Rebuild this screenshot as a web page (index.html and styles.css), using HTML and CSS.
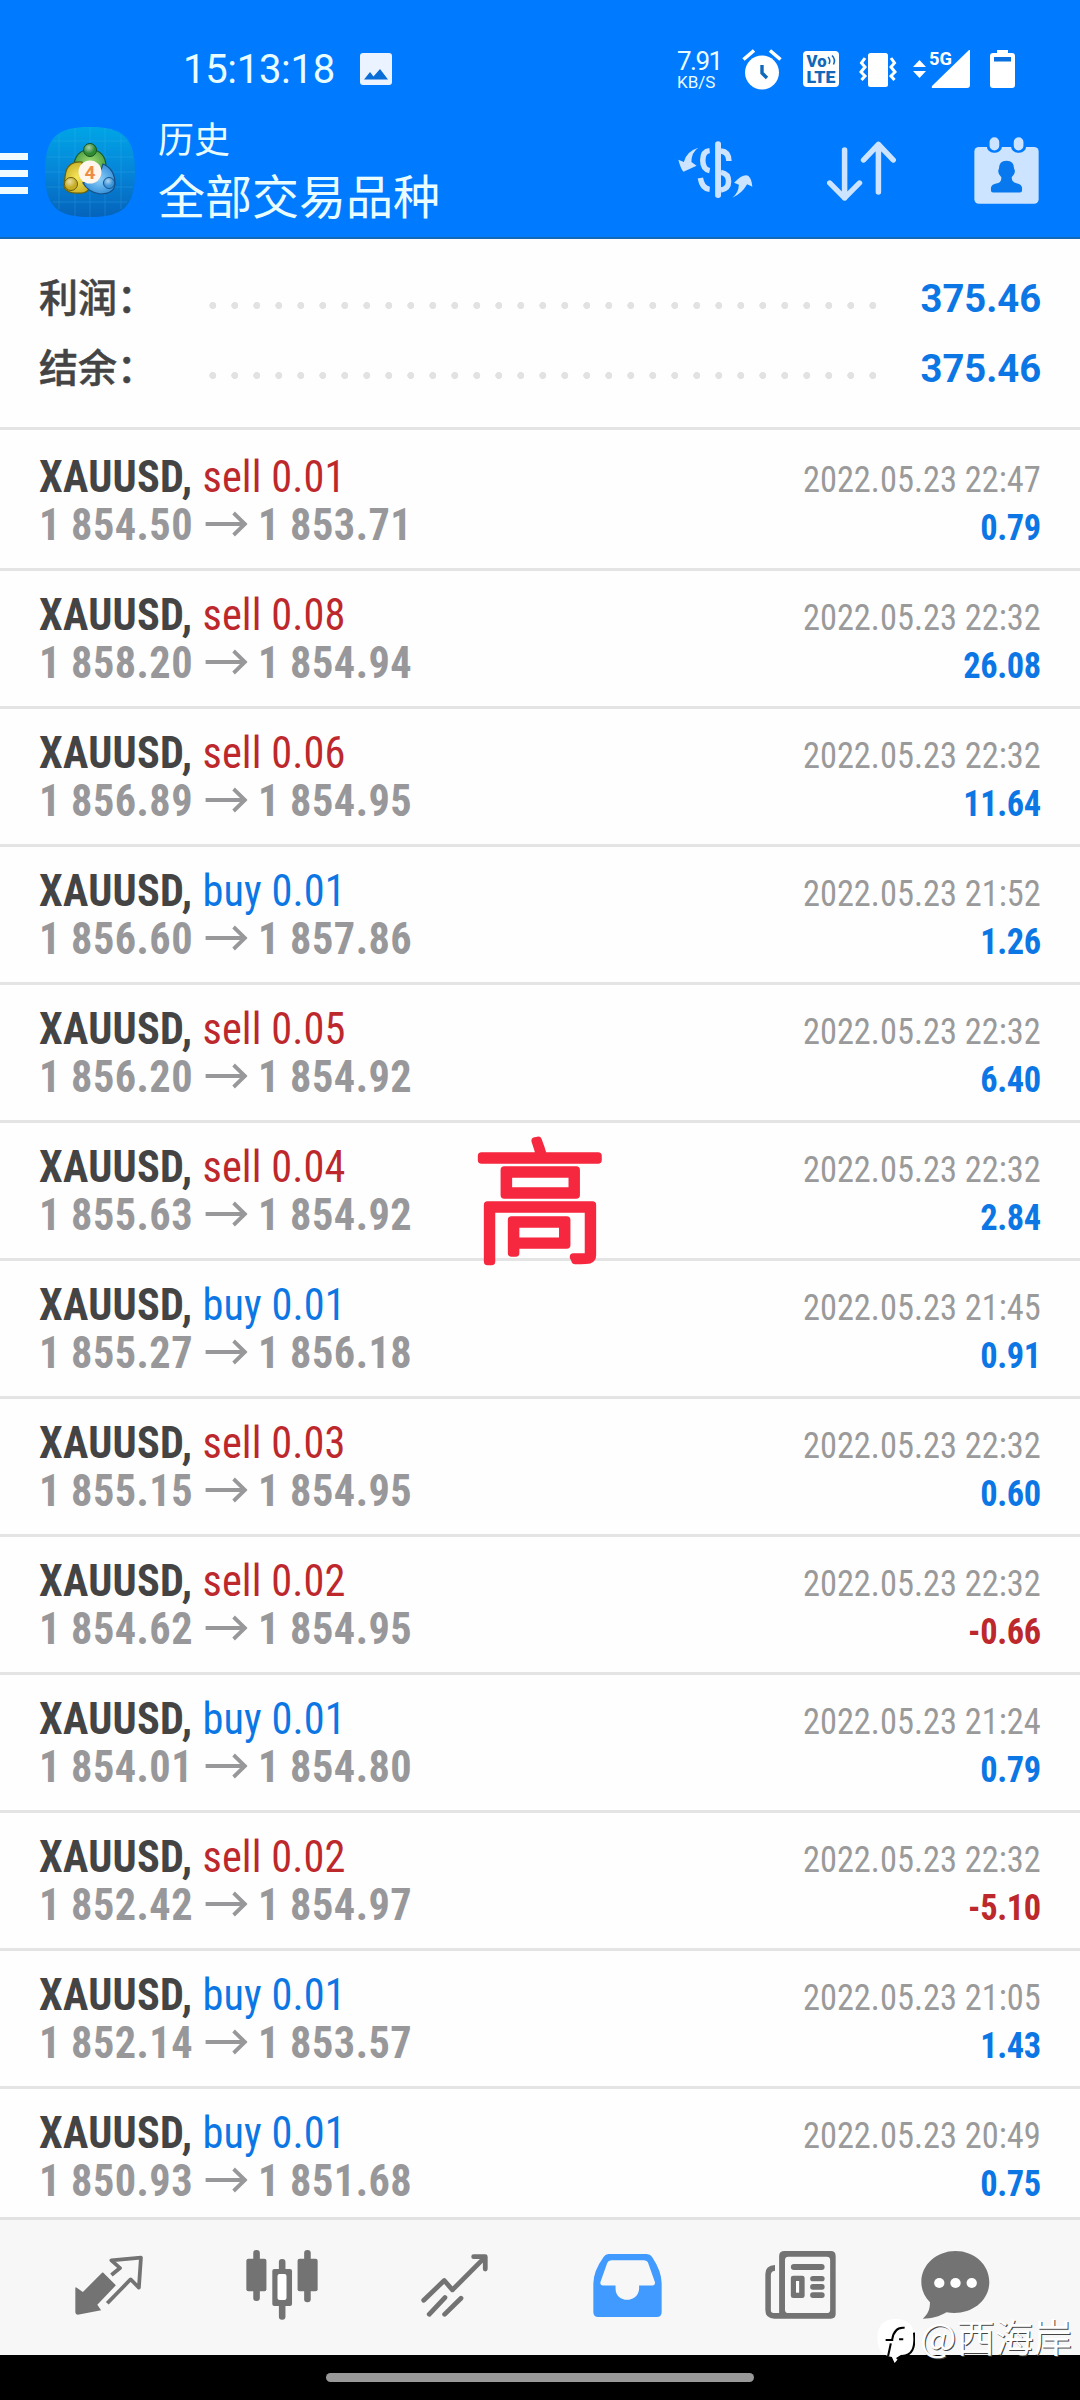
FILE: index.html
```html
<!DOCTYPE html>
<html lang="zh-CN">
<head>
<meta charset="utf-8">
<title>历史</title>
<link rel="stylesheet" href="styles.css">
</head>
<body>
<div class="screen">
  <header class="header">
    <div class="status">
      <div class="status-left">
        <span class="clock">15:13:18</span>
        <svg class="picture" width="32" height="32" viewBox="0 0 32 32"><rect width="32" height="32" rx="3" fill="#eaf3ff"/><path d="M4 26.500 10 19l3.500 4.500L20 16l8 10.500z" fill="#0a6cd6"/></svg>
      </div>
      <div class="status-right">
        <div class="speed"><span class="speed-value">7.91</span><span class="speed-unit">KB/S</span></div>
        <svg class="alarm" width="40" height="41" viewBox="0 0 40 41"><circle cx="20" cy="23.500" r="17" fill="#fff"/><path d="M1.500 10.500 12 1.500M38.500 10.500 28 1.500" stroke="#fff" stroke-width="3.600"/><path d="M20 16v8l5 5" fill="none" stroke="#1267b8" stroke-width="3.400"/></svg>
        <svg class="volte" width="36" height="36" viewBox="0 0 36 36"><rect width="36" height="36" rx="4" fill="#fff"/><text x="3.500" y="16" class="vo" textLength="20" lengthAdjust="spacingAndGlyphs">Vo</text><text x="3.500" y="32" class="vo" textLength="29" lengthAdjust="spacingAndGlyphs">LTE</text><path d="M25 6q3 3 1 7M29 4.500q4 4 1.500 9" fill="none" stroke="#1267b8" stroke-width="1.600"/></svg>
        <svg class="vibrate" width="38" height="36" viewBox="0 0 38 36"><rect x="9" y="1" width="20" height="34" rx="2.500" fill="#fff"/><path d="M6 6 2.500 11 6 15 2 20l4 4-3.500 4M32 6l3.500 5L32 15l4 5-4 4 3.500 4" fill="none" stroke="#fff" stroke-width="3"/></svg>
        <svg class="signal" width="58" height="38" viewBox="0 0 58 38"><path d="M0 17 6.500 10 13 17zM0 21h13l-6.500 7z" fill="#fff"/><path d="M57 0v35q0 3-3 3H20q-2 0-1-2L56 0z" fill="#fff"/><text x="16" y="14.500" class="fiveg" textLength="23" lengthAdjust="spacingAndGlyphs">5G</text></svg>
        <svg class="battery" width="25" height="38" viewBox="0 0 25 38"><path d="M7 0h11v3h4q3 0 3 3v29q0 3-3 3H3q-3 0-3-3V6q0-3 3-3h4z" fill="#fff"/><path d="M4 7h17v4.500H4z" fill="#0a6fdf"/></svg>
      </div>
    </div>
    <div class="toolbar">
      <div class="brand">
        <span class="burger"><i></i><i></i><i></i></span>
        <svg class="app-icon" width="90" height="90" viewBox="0 0 90 90">
          <defs>
            <linearGradient id="tile" x1="0" y1="0" x2="0" y2="1"><stop offset="0" stop-color="#00a5e6"/><stop offset=".5" stop-color="#0585d8"/><stop offset="1" stop-color="#0563bb"/></linearGradient>
            <radialGradient id="green"><stop offset="0" stop-color="#9fdd72"/><stop offset="1" stop-color="#4fa045"/></radialGradient>
            <radialGradient id="gold"><stop offset="0" stop-color="#f7e75a"/><stop offset="1" stop-color="#cdb52c"/></radialGradient>
            <radialGradient id="sky"><stop offset="0" stop-color="#8fd1fa"/><stop offset="1" stop-color="#3a93dc"/></radialGradient>
            <radialGradient id="ball" cx=".4" cy=".3"><stop offset="0" stop-color="#fff" stop-opacity=".6"/><stop offset="1" stop-color="#fff" stop-opacity="0"/></radialGradient>
          </defs>
          <path d="M45 0C78 0 90 10 90 45S78 90 45 90 0 80 0 45 12 0 45 0z" fill="url(#tile)"/>
          <path d="M14 8v74M30 1v88M45 0v90M60 1v88M76 8v74M8 14h74M2 30h86M0 45h90M2 60h86M8 75h74" stroke="#55c4f4" stroke-width=".7" opacity=".3"/>
          <path d="M29 40q0-16 16-18 16 2 16 18l-5 8H34z" fill="url(#green)" stroke="#165c2c" stroke-width="1.200"/>
          <path d="M37 35q-16-1-17 15l-1 10q3 7 15 6 8 1 11-6l-7-12z" fill="url(#gold)" stroke="#62610e" stroke-width="1.200"/>
          <path d="M58 37q12 5 12 20-1 10-15 10-12-2-17-11l15-4z" fill="url(#sky)" stroke="#164f83" stroke-width="1.200"/>
          <circle cx="45" cy="23" r="6.500" fill="#2e8b33" stroke="#175220"/><circle cx="26" cy="57" r="6.500" fill="#c6ad24" stroke="#695d10"/><circle cx="64" cy="56" r="5.500" fill="#3c94d9" stroke="#15568e"/>
          <circle cx="45" cy="23" r="6" fill="url(#ball)"/><circle cx="26" cy="57" r="6" fill="url(#ball)"/><circle cx="64" cy="56" r="5" fill="url(#ball)"/>
          <circle cx="45" cy="45" r="11.500" fill="#fff6ee"/><text x="45" y="51.500" text-anchor="middle" class="four">4</text>
        </svg>
        <div class="titles"><span class="title">历史</span><span class="subtitle">全部交易品种</span></div>
      </div>
      <div class="actions">
        <svg width="75" height="58" viewBox="400 421 218 174" preserveAspectRatio="none" fill="#cce4ff"><path d="M508 430q0-8 8.500-8t8.500 8v154q0 8-8.500 8t-8.500-8z"/><path d="M492 450q-20 2-20 29 0 27 20 31M465 532q5 32 27 34" fill="none" stroke="#cce4ff" stroke-width="16"/><path d="M525 451q22 2 23 30M525 515q22 4 22 27t-22 26" fill="none" stroke="#cce4ff" stroke-width="16"/><path d="M459 441q-20 14-20 43l15 11-38 18q-7-5-15-36l16 7q7-32 42-43zM558 591q18-15 19-39l-14-6q26-28 41-21 10 8 12 33l-15-7q-16 29-43 40z"/></svg>
        <svg width="69" height="60" viewBox="832 421 200 180" preserveAspectRatio="none" fill="none" stroke="#cce4ff" stroke-width="16" stroke-linecap="round" stroke-linejoin="round"><path d="M883 448v144M840 547l43 45 43-45M981 574V431M938 478l43-47 43 47"/></svg>
        <svg width="65" height="67" viewBox="1262 409 188 200" preserveAspectRatio="none"><rect x="1263" y="439" width="186" height="169" rx="13" fill="#cce4ff"/><rect x="1299" y="403" width="44" height="53" rx="20" fill="#007aff"/><rect x="1369" y="403" width="44" height="53" rx="20" fill="#007aff"/><rect x="1307" y="410" width="28" height="39" rx="14" fill="#cce4ff"/><rect x="1377" y="410" width="28" height="39" rx="14" fill="#cce4ff"/><path d="M1356 480q22 0 22 24 7 12-7 25 0 15 14 18 16 4 16 14v8q0 6-6 6h-78q-6 0-6-6v-8q0-10 18-14 13-3 12-18-13-13-7-25 0-24 22-24z" fill="#0878ee"/></svg>
      </div>
    </div>
  </header>

  <section class="summary">
    <div class="sum-row"><span class="sum-label">利润：</span><span class="dots"></span><b class="sum-value">375.46</b></div>
    <div class="sum-row"><span class="sum-label">结余：</span><span class="dots"></span><b class="sum-value">375.46</b></div>
  </section>

  <main class="list" id="list"></main>

  <nav class="tabs">
    <svg width="68" height="60" viewBox="216 169 198 180" preserveAspectRatio="none"><path d="M297 221 335 260 281 318 292 335 224 348q-7 0-7-7v-73q0-4 4-1l18 13 55-57q3-3 5-2z" fill="#737373"/><path d="M322 229 347 208 322 185 408 177 402 267 378 242 310 314" fill="none" stroke="#737373" stroke-width="11" stroke-linejoin="round"/></svg>
    <svg width="72" height="70" viewBox="712 153 208 210" preserveAspectRatio="none" fill="#737373"><rect x="733" y="153" width="19" height="153" rx="9"/><rect x="713" y="179" width="58" height="98" rx="6"/><rect x="880" y="153" width="19" height="157" rx="9"/><rect x="861" y="179" width="58" height="98" rx="6"/><rect x="807" y="180" width="19" height="182" rx="9"/><rect x="788" y="210" width="57" height="111" rx="6"/><rect x="803" y="225" width="26" height="78" rx="6" fill="#fff"/></svg>
    <svg width="67" height="63" viewBox="1220 161 196 188" preserveAspectRatio="none" fill="none" stroke="#737373" stroke-width="14" stroke-linecap="round" stroke-linejoin="round"><path d="M1228 299 1288 240 1312 268 1406 172M1374 169h34v37M1244 341 1290 291M1289 341 1337 293"/></svg>
    <svg width="69" height="63" viewBox="155 161 199 188" preserveAspectRatio="none"><path d="M200 161h110q10 0 15 8 28 43 28 80v86q0 14-14 14H170q-14 0-14-14v-86q0-37 30-80 5-8 14-8z" fill="#419aff"/><path d="M208 180h93q10 0 13 8l20 58q0 9-8 9h-38v9c-2 45-68 45-68 0v-9h-36q-8 0-8-9l20-58q3-8 12-8z" fill="#f7f7f7"/></svg>
    <svg width="71" height="68" viewBox="655 153 206 204" preserveAspectRatio="none"><path fill-rule="evenodd" d="M712 153h134q14 0 14 15v174q0 14-14 14H682q-26 0-26-26V222q0-26 28-27v17q-12 1-12 14v105q0 8 8 8h16V168q0-15 16-15z" fill="#737373"/><rect x="713" y="170" width="131" height="169" rx="10" fill="#f7f7f7"/><g fill="#737373"><rect x="730" y="192" width="98" height="18" rx="9"/><rect x="730" y="227" width="40" height="67" rx="7"/><rect x="786" y="228" width="42" height="16" rx="8"/><rect x="786" y="252" width="42" height="17" rx="8"/><rect x="786" y="277" width="42" height="17" rx="8"/></g><rect x="745" y="243" width="9" height="35" fill="#fff"/></svg>
    <svg width="69" height="68" viewBox="1105 153 200 204" preserveAspectRatio="none"><path d="M1205 153c55 0 98 41 98 93 0 60-58 103-124 91-22 13-42 19-69 19 15-12 21-28 21-49-17-19-25-38-25-61 0-52 44-93 99-93z" fill="#737373"/><g fill="#fff"><circle cx="1158" cy="249" r="15"/><circle cx="1205" cy="249" r="15"/><circle cx="1252" cy="249" r="15"/></g></svg>
  </nav>
  <div class="system"><span class="pill"></span></div>

  <svg class="stamp" width="160" height="150" viewBox="0 0 160 150"><text x="80" y="123" text-anchor="middle">高</text></svg>
  <div class="watermark">
    <svg width="38" height="44" viewBox="980 358 110 130" preserveAspectRatio="none"><path d="M1035 358q53 0 53 56 0 50-41 55l-16 19-8-18q-42-6-42-56 0-56 54-56z" fill="#fff"/><path d="M1060 384q-30-4-36 34M1005 420h22M1044 418h12M1020 430l-8 38M1087 398q8 70-36 69l-14 9" fill="none" stroke="#000" stroke-width="6"/></svg>
    <span>@西海岸</span>
  </div>
</div>
<script src="history.js"></script>
</body>
</html>
```
FILE: styles.css
```css
* { box-sizing: border-box; }
body { margin: 0; font-family: Roboto, "Noto Sans CJK SC", sans-serif; }
svg { display: block; flex: none; }
.screen { position: relative; width: 1080px; height: 2400px; overflow: hidden; display: flex; flex-direction: column; background: #fefefe; }

.header { flex: none; height: 239px; background: #007aff; border-bottom: 2px solid #1468b8; color: #e9fdff; }
.status { display: flex; justify-content: space-between; height: 112px; padding: 49px 65px 0 183px; }
.status-left { display: flex; gap: 25px; }
.clock { width: 152px; font-size: 40px; line-height: 42px; font-weight: 400; letter-spacing: -0.3px; white-space: nowrap; }
.picture { margin-top: 4px; }
.status-right { display: flex; }
.speed { display: flex; flex-direction: column; width: 65px; font-weight: 400; }
.speed-value { font-size: 26px; line-height: 25px; letter-spacing: -1.5px; }
.speed-unit { font-size: 17px; line-height: 17px; }
.volte { margin: 2px 0 0 21px; }
.vibrate { margin: 3px 0 0 20px; }
.signal { margin: 1px 0 0 16px; overflow: visible; }
.battery { margin: 1px 0 0 19px; }
.vo { font: 900 17px Roboto, sans-serif; fill: #1267b8; }
.fiveg { font: 700 19px Roboto, sans-serif; fill: #fff; }

.toolbar { display: flex; justify-content: space-between; padding-right: 41px; }
.brand { display: flex; }
.burger { display: flex; flex-direction: column; gap: 10px; width: 28px; margin-top: 41px; }
.burger i { height: 7px; background: #f0fbff; }
.app-icon { margin: 15px 0 0 17px; }
.four { font: 700 19px Roboto, sans-serif; fill: #ee8c45; }
.titles { display: flex; flex-direction: column; margin: -3px 0 0 23px; font-family: "Noto Sans CJK SC", sans-serif; }
.title { font-size: 36px; line-height: 56px; }
.subtitle { font-size: 47px; line-height: 58px; }
.actions { display: flex; align-items: flex-start; padding-top: 25px; }
.actions svg:nth-child(1) { margin: 4px 74px 0 0; }
.actions svg:nth-child(2) { margin: 4px 78px 0 0; }

.summary { flex: none; height: 191px; padding: 23px 39px 0 39px; border-bottom: 3px solid #e4e4e4; }
.sum-row { display: flex; height: 70px; align-items: center; }
.sum-label { width: 170px; margin-top: -4px; font: 500 39px/70px "Noto Sans CJK SC", sans-serif; color: #444; -webkit-text-stroke: 0.5px #444; }
.dots { width: 682px; height: 7px; margin-top: 17px; background: radial-gradient(circle 3.8px at 3.8px 3.5px, #e2e2e2 85%, transparent) 0 0 / 22px 7px; }
.sum-value { margin: 4px 0 0 auto; font-size: 39px; line-height: 70px; color: #0c77e4; transform: scaleX(0.98); transform-origin: right; }

.list { flex: 1; min-height: 0; overflow: hidden; padding-top: 3px; }
.row { display: flex; justify-content: space-between; height: 138px; padding: 20px 39px 0 39px; border-bottom: 3px solid #e4e4e4; font-family: "Roboto Condensed", Roboto, sans-serif; font-stretch: 75%; }
.trade { transform: scaleX(0.94); transform-origin: left; }
.deal { display: flex; font-size: 45px; line-height: 48px; white-space: pre; }
.symbol { width: 174px; font-weight: 700; color: #444; letter-spacing: 0.3px; }
.side { letter-spacing: 0.1px; }
.sell { color: #bd282c; }
.buy { color: #0c77e4; }
.price { display: grid; grid-template-columns: 177px 56px auto; align-items: center; font-size: 45px; line-height: 48px; font-weight: 700; color: #98989b; letter-spacing: 0.5px; white-space: nowrap; }
.price svg { margin-top: -3px; }
.meta { padding-top: 3px; text-align: right; font-size: 37px; line-height: 48px; transform: scaleX(0.93); transform-origin: right; }
.time { color: #9a9a9a; }
.profit { font-weight: 700; color: #0c77e4; letter-spacing: -0.4px; }
.loss { color: #bd282c; }

.tabs { flex: none; display: grid; grid-template-columns: repeat(5, 173px) 136px; height: 138px; padding: 0 0 5px 22px; align-items: center; justify-items: center; background: #f7f7f7; border-top: 3px solid #e2e2e2; }
.system { flex: none; height: 45px; background: #000; padding-top: 18px; }
.pill { display: block; width: 428px; height: 9px; margin: 0 auto; border-radius: 5px; background: #999; }

.stamp { position: absolute; left: 460px; top: 1129px; overflow: visible; }
.stamp text { font: 100 134px "Noto Sans CJK SC", sans-serif; fill: #f5283f; stroke: #f5283f; stroke-width: 7.5px; stroke-linejoin: round; }
.watermark { position: absolute; left: 877px; top: 2319px; display: flex; gap: 5px; font: 400 38.5px/40px "Noto Sans CJK SC", sans-serif; color: #fff; text-shadow: 1px 1px 0 #444; white-space: nowrap; }
.watermark span { margin-top: -4px; }
```
FILE: history.js
```js
const deals = [
  ['sell', '0.01', '1 854.50', '1 853.71', '22:47', '0.79'],
  ['sell', '0.08', '1 858.20', '1 854.94', '22:32', '26.08'],
  ['sell', '0.06', '1 856.89', '1 854.95', '22:32', '11.64'],
  ['buy', '0.01', '1 856.60', '1 857.86', '21:52', '1.26'],
  ['sell', '0.05', '1 856.20', '1 854.92', '22:32', '6.40'],
  ['sell', '0.04', '1 855.63', '1 854.92', '22:32', '2.84'],
  ['buy', '0.01', '1 855.27', '1 856.18', '21:45', '0.91'],
  ['sell', '0.03', '1 855.15', '1 854.95', '22:32', '0.60'],
  ['sell', '0.02', '1 854.62', '1 854.95', '22:32', '-0.66'],
  ['buy', '0.01', '1 854.01', '1 854.80', '21:24', '0.79'],
  ['sell', '0.02', '1 852.42', '1 854.97', '22:32', '-5.10'],
  ['buy', '0.01', '1 852.14', '1 853.57', '21:05', '1.43'],
  ['buy', '0.01', '1 850.93', '1 851.68', '20:49', '0.75'],
];
const arrow = '<svg width="45" height="26" viewBox="0 0 45 26" fill="none" stroke="#98989b" stroke-width="4"><path d="M0 13h42M30 2l12 11-12 11"/></svg>';
document.getElementById('list').innerHTML = deals.map(([side, lots, open, close, time, profit]) => `
  <article class="row">
    <div class="trade">
      <div class="deal"><span class="symbol">XAUUSD,</span><span class="side ${side}">${side} ${lots}</span></div>
      <div class="price"><span>${open}</span>${arrow}<span>${close}</span></div>
    </div>
    <div class="meta">
      <div class="time">2022.05.23 ${time}</div>
      <div class="profit${profit[0] === '-' ? ' loss' : ''}">${profit}</div>
    </div>
  </article>`).join('');
```
